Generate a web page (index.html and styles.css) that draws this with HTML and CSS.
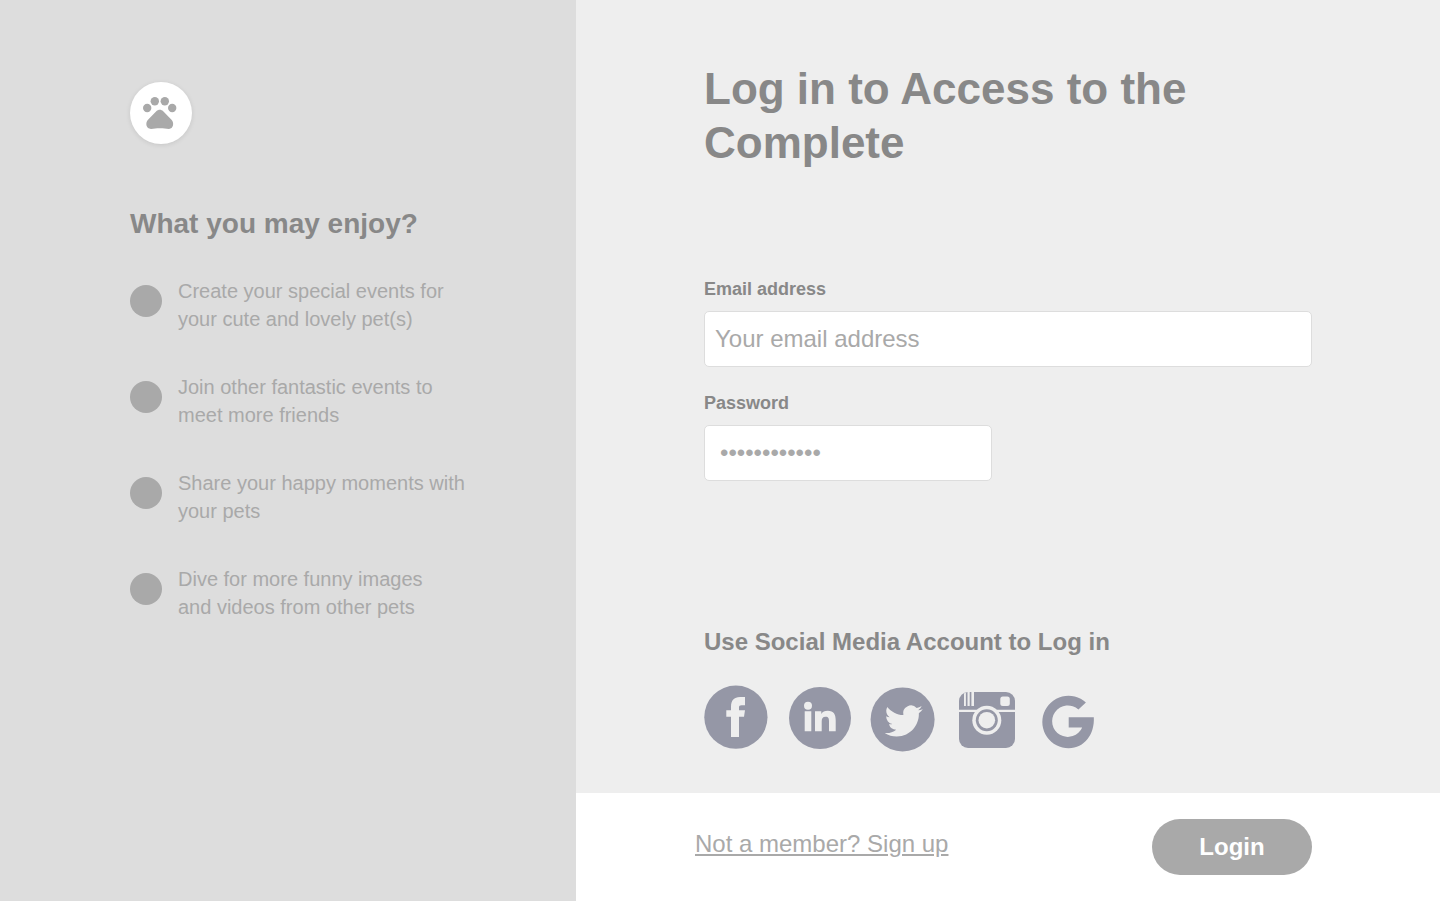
FILE: index.html
```html
<!DOCTYPE html>
<html lang="en">
<head>
<meta charset="utf-8">
<title>Log in</title>
<link rel="stylesheet" href="styles.css">
</head>
<body>
<div class="page">
  <aside class="benefits">
    <a class="logo" href="#" aria-label="Home">
      <svg viewBox="0 0 62 62" fill="#a9a9a9" aria-hidden="true">
        <circle cx="17.200" cy="26" r="4.200"/><circle cx="24.800" cy="19.300" r="4.200"/><circle cx="34.800" cy="19.300" r="4.200"/><circle cx="42.200" cy="26" r="4.200"/>
        <path d="M26.300 29.200C28.400 27.200 31.200 27.200 33.200 29.200L41.500 37.800C44.500 41.200 43.300 46.900 39 46.900C36 46.900 33.500 46.200 29.900 46.200C26.200 46.200 24 46.900 21 46.900C16 46.900 15 41.200 18 37.800Z"/>
      </svg>
    </a>
    <h2 class="benefits-title">What you may enjoy?</h2>
    <ul class="benefits-list">
      <li class="benefit"><p>Create your special events for<br>your cute and lovely pet(s)</p></li>
      <li class="benefit"><p>Join other fantastic events to<br>meet more friends</p></li>
      <li class="benefit"><p>Share your happy moments with<br>your pets</p></li>
      <li class="benefit"><p>Dive for more funny images<br>and videos from other pets</p></li>
    </ul>
  </aside>
  <form class="login">
    <div class="login-main">
      <h1 class="login-title">Log in to Access to the Complete</h1>
      <div class="field">
        <label class="field-label" for="email">Email address</label>
        <input class="field-input" id="email" type="email" placeholder="Your email address">
      </div>
      <div class="field">
        <label class="field-label" for="password">Password</label>
        <input class="field-input field-input-password" id="password" type="password" value="mypassword12">
      </div>
      <section class="social">
        <h2 class="social-title">Use Social Media Account to Log in</h2>
        <div class="social-links">
          <a class="social-link" href="#" aria-label="Facebook">
            <svg viewBox="0 0 64 66"><circle cx="31.900" cy="31.200" r="31.600"/><path class="cut" d="M27 51V30.700H22.300V24.300H27V20.500C27 14.500 30 11 36 11H41V19.300H37.500C35.700 19.300 35 20 35 21.500V24.300H41L40 30.700H35V51Z"/></svg>
          </a>
          <a class="social-link" href="#" aria-label="LinkedIn">
            <svg viewBox="0 0 64 66"><circle cx="32" cy="32" r="31"/><g class="cut"><circle cx="20" cy="19.700" r="4"/><path d="M16.700 25.300H23.300V45.300H16.700ZM27 25.300H33.300V28C34.500 26 36.700 24.800 39.700 24.800C45.800 24.800 47.700 28.600 47.700 34.200V45.300H41V35.500C41 32.500 40.600 30.700 37.600 30.700C34.700 30.700 33.700 32.600 33.700 35.500V45.300H27Z"/></g></svg>
          </a>
          <a class="social-link" href="#" aria-label="Twitter">
            <svg viewBox="0 0 64 66"><circle cx="30.600" cy="33.400" r="32"/><path class="cut" transform="translate(12.700 15.900) scale(1.585)" d="M23.953 4.570a10 10 0 01-2.825.775 4.958 4.958 0 002.163-2.723c-.951.555-2.005.959-3.127 1.184a4.920 4.920 0 00-8.384 4.482C7.690 8.095 4.067 6.130 1.640 3.162a4.822 4.822 0 00-.666 2.475c0 1.710.870 3.213 2.188 4.096a4.904 4.904 0 01-2.228-.616v.060a4.923 4.923 0 003.946 4.827 4.996 4.996 0 01-2.212.085 4.936 4.936 0 004.604 3.417 9.867 9.867 0 01-6.102 2.105c-.390 0-.779-.023-1.170-.067a13.995 13.995 0 007.557 2.209c9.053 0 13.998-7.496 13.998-13.985 0-.210 0-.420-.015-.630A9.935 9.935 0 0024 4.590z"/></svg>
          </a>
          <a class="social-link" href="#" aria-label="Instagram">
            <svg viewBox="0 0 64 66"><rect x="3" y="6" width="56" height="56" rx="9"/><g class="cut"><path d="M8 7.500L9.900 6.500V20H8ZM11.500 6H13.700V20H11.500ZM15.400 6H18V20H15.400ZM3 23.700H59V26H3Z"/><rect x="44.300" y="10.500" width="9.500" height="9.500" rx="2.500"/><circle cx="30.800" cy="34.200" r="14.500"/></g><circle cx="30.800" cy="34.200" r="11"/><circle class="cut" cx="30.800" cy="34.200" r="8.300"/></svg>
          </a>
          <a class="social-link" href="#" aria-label="Google">
            <svg viewBox="0 0 64 66"><path d="M45.900 16.400L38.400 23.600A15.700 15.700 0 1 0 42.200 41.500H28.700V31.200H53.800C54.800 48 44.500 62.200 28.700 62.200A26.200 26.200 0 1 1 45.900 16.400Z"/></svg>
          </a>
        </div>
      </section>
    </div>
    <div class="login-footer">
      <a class="signup" href="#">Not a member? Sign up</a>
      <button class="login-button" type="submit">Login</button>
    </div>
  </form>
</div>
</body>
</html>
```

FILE: styles.css
```css
* {
  box-sizing: border-box;
}

body {
  margin: 0;
  padding: 0 14px 17px 0;
  background: #fff;
  color: #888;
  font-family: "Liberation Sans", Arial, sans-serif;
}

h1, h2, ul, p {
  margin: 0;
  padding: 0;
}

.page {
  display: grid;
  grid-template-columns: 2fr 3fr;
  min-height: calc(100vh - 17px);
}

.benefits {
  padding: 82px 32px 82px 130px;
  background: #ddd;
}

.logo {
  display: block;
  width: 62px;
  height: 62px;
  border-radius: 50%;
  background: #fff;
  box-shadow: 0 1px 5px rgba(0, 0, 0, 0.1);
}

.logo svg {
  display: block;
}

.benefits-title {
  margin-top: 64px;
  font-size: 28px;
  line-height: 32px;
}

.benefits-list {
  display: grid;
  gap: 40px;
  margin-top: 37px;
  list-style: none;
}

.benefit {
  display: flex;
  gap: 16px;
  color: #a9a9a9;
  font-size: 20px;
  line-height: 28px;
}

.benefit::before {
  content: "";
  flex: none;
  width: 32px;
  height: 32px;
  margin-top: 8px;
  border-radius: 50%;
  background: #a9a9a9;
}

.login {
  display: flex;
  flex-direction: column;
  background: #eee;
}

.login-main {
  display: flex;
  flex: 1;
  flex-direction: column;
  gap: 24px;
  padding: 62px 128px 41px;
}

.login-title {
  margin-bottom: 83px;
  font-size: 44px;
  line-height: 54px;
}

.field {
  display: flex;
  flex-direction: column;
  gap: 10px;
}

.field-label {
  font-size: 18px;
  font-weight: bold;
  line-height: 24px;
}

.field-input {
  width: 100%;
  height: 56px;
  padding: 0 10px;
  border: 1px solid #ddd;
  border-radius: 5px;
  background: #fff;
  color: #a9a9a9;
  font: 24px "Liberation Sans", Arial, sans-serif;
}

.field-input::placeholder {
  color: #a9a9a9;
}

.field-input-password {
  max-width: 288px;
  padding: 0 15px;
}

.social {
  margin-top: auto;
}

.social-title {
  font-size: 24px;
  line-height: 28px;
}

.social-links {
  display: flex;
  gap: 20px;
  margin-top: 30px;
}

.social-link {
  width: 64px;
  height: 66px;
}

.social-link svg {
  display: block;
  overflow: visible;
  fill: #9597a6;
}

.social-link .cut {
  fill: #eee;
}

.login-footer {
  display: flex;
  align-items: center;
  justify-content: space-between;
  min-height: 108px;
  padding: 0 128px 0 119px;
  background: #fff;
}

.signup {
  padding-bottom: 6px;
  color: #a9a9a9;
  font-size: 24px;
  line-height: 28px;
}

.login-button {
  width: 160px;
  height: 56px;
  border: 0;
  border-radius: 28px;
  background: #a9a9a9;
  color: #fff;
  font: bold 24px "Liberation Sans", Arial, sans-serif;
}
```
